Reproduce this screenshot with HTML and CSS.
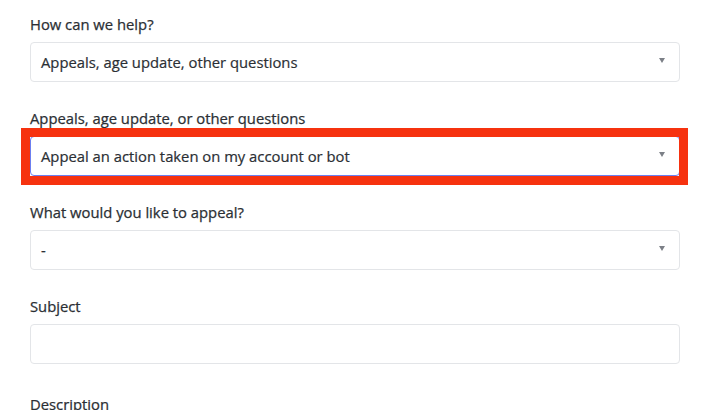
FILE: index.html
```html
<!DOCTYPE html>
<html lang="en">
<head>
<meta charset="utf-8">
<title>Submit a request</title>
<link rel="stylesheet" href="styles.css">
</head>
<body>
<form class="form">
  <div class="field">
    <label class="label">How can we help?</label>
    <div class="select"><span class="value">Appeals, age update, other questions</span><span class="caret"></span></div>
  </div>
  <div class="field">
    <label class="label">Appeals, age update, or other questions</label>
    <div class="select focused highlighted"><span class="value">Appeal an action taken on my account or bot</span><span class="caret"></span></div>
  </div>
  <div class="field">
    <label class="label">What would you like to appeal?</label>
    <div class="select"><span class="value">-</span><span class="caret"></span></div>
  </div>
  <div class="field field-subject">
    <label class="label">Subject</label>
    <div class="input"></div>
  </div>
  <div class="field">
    <label class="label">Description</label>
    <div class="input textarea"></div>
  </div>
</form>
</body>
</html>
```
FILE: styles.css
```css
* { box-sizing: border-box; }
html, body { margin: 0; padding: 0; background: #ffffff; }
body {
  font-family: "Open Sans", "Liberation Sans", sans-serif;
  font-size: 14.8px;
  color: #2b2f34;
  overflow: hidden;
  height: 410px;
}
.form {
  width: 650px;
  margin-left: 30px;
  padding-top: 14px;
  display: flex;
  flex-direction: column;
  gap: 26px;
}
.field {
  display: flex;
  flex-direction: column;
  gap: 8px;
}
.field-subject { margin-bottom: 4px; }
.label {
  line-height: 20px;
  height: 20px;
  font-weight: 500;
  color: #2b2f34;
  -webkit-text-stroke: 0.25px #2b2f34;
}
.select, .input {
  height: 40px;
  border: 1px solid #e3e5e8;
  border-radius: 4px;
  background: #fff;
  display: flex;
  align-items: center;
  justify-content: space-between;
  padding: 0 14px 0 10px;
  line-height: 20px;
}
.textarea { height: 120px; }
.value {
  color: #2b2f34;
  -webkit-text-stroke: 0.2px #2b2f34;
}
.caret {
  width: 0;
  height: 0;
  border-left: 3px solid transparent;
  border-right: 3px solid transparent;
  border-top: 5px solid #7c8087;
  margin-top: -4px;
}
.focused { border-color: #6b7ff0; }
.highlighted { position: relative; }
.highlighted::after {
  content: "";
  position: absolute;
  top: -9px;
  left: -10px;
  right: -9px;
  bottom: -10px;
  border: 9px solid #f6320f;
  pointer-events: none;
}
```
